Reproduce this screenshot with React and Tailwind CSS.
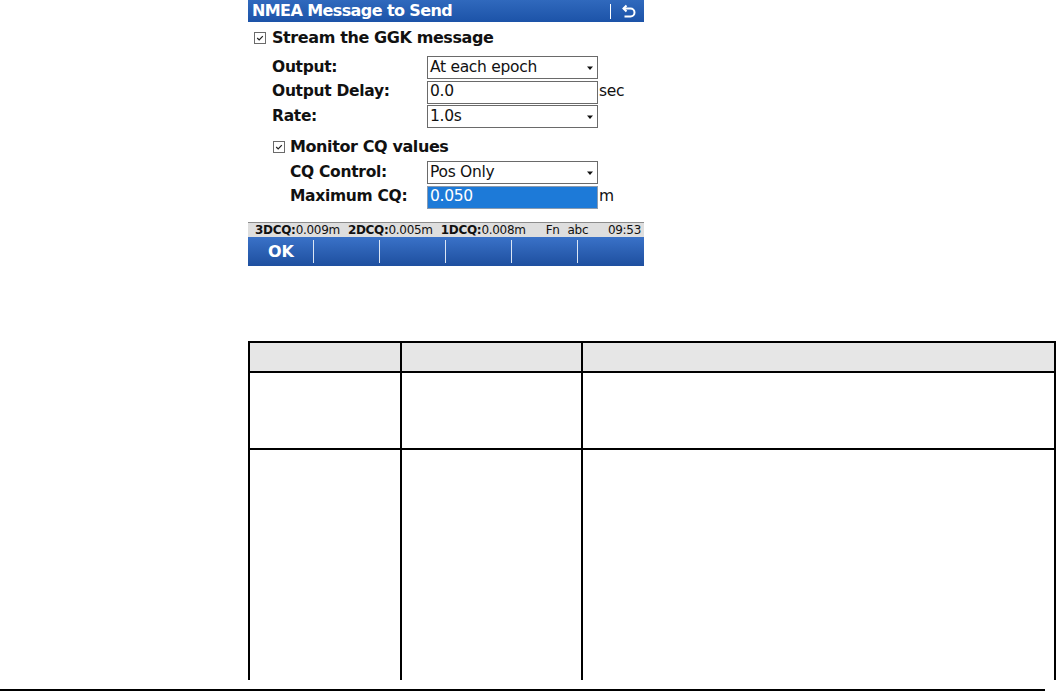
import React from "react";

const FONT = { fontFamily: '"DejaVu Sans", Verdana, sans-serif' };

function Check({ className = "" }) {
  return (
    <div className={"w-[12px] h-[12px] border border-[#6b6b6b] bg-white flex items-center justify-center " + className}>
      <svg width="10" height="10" viewBox="0 0 10 10">
        <path d="M2.2 5 L4.2 7 L7.8 3.2" fill="none" stroke="#222" strokeWidth="1.2" />
      </svg>
    </div>
  );
}

function Arrow() {
  return (
    <svg width="8" height="6" viewBox="0 0 8 6" className="mr-[3px]">
      <path d="M1 1.5 H7 L4 5 Z" fill="#111" />
    </svg>
  );
}

function Field({ label, value, kind = "select", unit, indent, highlight }) {
  return (
    <div className="flex items-center h-[23px]">
      <div className={"w-[179px] shrink-0 font-bold text-[15.5px] text-[#111] tracking-[-0.3px] " + (indent ? "pl-[42px]" : "pl-[24px]")}>
        {label}
      </div>
      <div
        className={
          "w-[171px] h-[23px] border flex items-center justify-between pl-[2px] text-[15.5px] tracking-[-0.3px] " +
          (highlight ? "bg-[#1d7ad8] border-[#8a9bb0] text-white" : "bg-white border-[#6a6a6a] text-[#111]")
        }
      >
        <span className="leading-none">{value}</span>
        {kind === "select" && <Arrow />}
      </div>
      {unit && <span className="ml-[1px] text-[15.5px] text-[#111] tracking-[-0.3px]">{unit}</span>}
    </div>
  );
}

export default function App() {
  return (
    <div className="w-[1057px] h-[693px] bg-white overflow-hidden flex flex-col" style={FONT}>
      <div className="ml-[248px] w-[396px] h-[266px] flex flex-col bg-white">
        {/* title bar */}
        <div className="h-[22px] bg-gradient-to-b from-[#3069bd] to-[#1c53a8] flex items-center justify-between pl-[4px] pr-[8px]">
          <span className="text-white font-bold text-[16px] tracking-[-0.6px] leading-none">NMEA Message to Send</span>
          <div className="flex items-center gap-[10px]">
            <div className="w-[1.5px] h-[15px] bg-white" />
            <svg width="15" height="15" viewBox="0 0 15 15">
              <path d="M2.5 4.5 H9.5 A4 4 0 0 1 9.5 12.5 H3.5" fill="none" stroke="white" strokeWidth="2" />
              <path d="M5.5 1.5 L2.5 4.5 L5.5 7.5" fill="none" stroke="white" strokeWidth="2" />
            </svg>
          </div>
        </div>
        {/* content */}
        <div className="flex-1 flex flex-col">
          <div className="flex items-center h-[20px] mt-[6px] pl-[6px]">
            <Check />
            <span className="ml-[6px] font-bold text-[16px] text-[#111] tracking-[-0.4px]">Stream the GGK message</span>
          </div>
          <div className="flex flex-col gap-[1.5px] mt-[8px]">
            <Field label="Output:" value="At each epoch" />
            <Field label="Output Delay:" value="0.0" kind="input" unit="sec" />
            <Field label="Rate:" value="1.0s" />
          </div>
          <div className="flex items-center h-[20px] mt-[9px] pl-[25px]">
            <Check />
            <span className="ml-[5px] font-bold text-[16px] text-[#111] tracking-[-0.4px]">Monitor CQ values</span>
          </div>
          <div className="flex flex-col gap-[1.5px] mt-[4px]">
            <Field label="CQ Control:" value="Pos Only" indent />
            <Field label="Maximum CQ:" value="0.050" kind="input" unit="m" indent highlight />
          </div>
        </div>
        {/* status bar */}
        <div className="h-[15px] bg-[#dedede] border-t border-[#8d8d8d] flex items-center pl-[7px] pr-[3px] text-[12px] text-[#111] tracking-[-0.3px] leading-none whitespace-nowrap">
          <span><b>3DCQ:</b>0.009m</span>
          <span className="ml-[8px]"><b>2DCQ:</b>0.005m</span>
          <span className="ml-[8px]"><b>1DCQ:</b>0.008m</span>
          <span className="ml-[20px]">Fn</span>
          <span className="ml-[8px]">abc</span>
          <span className="ml-auto">09:53</span>
        </div>
        {/* softkeys */}
        <div className="h-[29px] bg-gradient-to-b from-[#3a72c8] to-[#1e4f9f] grid grid-cols-6">
          {["OK", "", "", "", "", ""].map((t, i) => (
            <div key={i} className="relative flex items-center justify-center">
              <span className="text-white font-bold text-[16px]">{t}</span>
              {i < 5 && <div className="absolute right-0 top-[3px] bottom-[3px] w-[1.5px] bg-[#dce6f5]" />}
            </div>
          ))}
        </div>
      </div>

      {/* table */}
      <div className="ml-[248px] mt-[75px] w-[808px] border-l-2 border-t-2 border-r-2 border-black flex flex-col">
        <div className="h-[30px] bg-[#e6e6e6] grid grid-cols-[152px_181px_1fr] border-b-2 border-black">
          <div className="border-r-2 border-black" />
          <div className="border-r-2 border-black" />
          <div />
        </div>
        <div className="h-[77px] grid grid-cols-[152px_181px_1fr] border-b-2 border-black">
          <div className="border-r-2 border-black" />
          <div className="border-r-2 border-black" />
          <div />
        </div>
        <div className="h-[230px] grid grid-cols-[152px_181px_1fr]">
          <div className="border-r-2 border-black" />
          <div className="border-r-2 border-black" />
          <div />
        </div>
      </div>
      <div className="mt-auto mb-[2px] w-[1045px] h-[2px] bg-black" />
    </div>
  );
}
